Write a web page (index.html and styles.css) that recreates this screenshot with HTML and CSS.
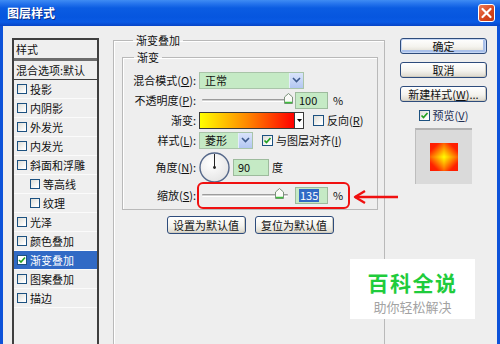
FILE: index.html
```html
<!DOCTYPE html>
<html lang="zh-CN">
<head>
    <meta charset="UTF-8">
    <meta name="viewport" content="width=device-width, initial-scale=1.0">
    <title>图层样式</title>
    <link rel="stylesheet" href="styles.css">
</head>
<body>
    <div class="window">
        <div class="titlebar">
            <span class="title">图层样式</span>
            <span class="close">
                <svg width="17" height="18" viewBox="0 0 17 18">
                    <path d="M4.5 5 L12.5 13 M12.5 5 L4.5 13" stroke="#fff" stroke-width="2.2" stroke-linecap="round"/>
                </svg>
            </span>
        </div>

        <div class="content">
            <ul class="style-list">
                <li class="list-head">样式</li>
                <li class="list-blend">混合选项:默认</li>
                <li><span class="check"></span>投影</li>
                <li><span class="check"></span>内阴影</li>
                <li><span class="check"></span>外发光</li>
                <li><span class="check"></span>内发光</li>
                <li><span class="check"></span>斜面和浮雕</li>
                <li class="sub"><span class="check"></span>等高线</li>
                <li class="sub"><span class="check"></span>纹理</li>
                <li><span class="check"></span>光泽</li>
                <li><span class="check"></span>颜色叠加</li>
                <li class="active">
                    <span class="check">
                        <svg width="8" height="8" viewBox="0 0 8 8"><path d="M1 4 L3 6 L7 1.5" stroke="#21a121" stroke-width="1.6" fill="none"/></svg>
                    </span>渐变叠加
                </li>
                <li><span class="check"></span>图案叠加</li>
                <li><span class="check"></span>描边</li>
                <li class="empty"></li>
            </ul>

            <fieldset class="group outer">
                <legend>渐变叠加</legend>
                <fieldset class="group inner">
                    <legend>渐变</legend>
                    <div class="form">
                        <label class="lbl">混合模式(<u>O</u>):</label>
                        <div class="ctl">
                            <div class="select blend">
                                <span class="select-text">正常</span>
                                <span class="select-arrow">
                                    <svg width="9" height="6" viewBox="0 0 9 6"><path d="M1 1 L4.5 4.5 L8 1" stroke="#3d5a8c" stroke-width="1.6" fill="none"/></svg>
                                </span>
                            </div>
                        </div>

                        <label class="lbl">不透明度(<u>P</u>):</label>
                        <div class="ctl">
                            <div class="slider">
                                <div class="track"></div>
                                <svg class="thumb" style="left: 82px" width="9" height="11" viewBox="0 0 9 11">
                                    <path d="M0.5 4 L4.5 0.5 L8.5 4 L8.5 10.5 L0.5 10.5 Z" fill="#fbfbf8" stroke="#7a917a"/>
                                    <path d="M1 9.5 L8 9.5" stroke="#3fbf3f" stroke-width="1.5"/>
                                </svg>
                            </div>
                            <div class="field num">100</div>
                            <span class="unit">%</span>
                        </div>

                        <label class="lbl">渐变:</label>
                        <div class="ctl">
                            <div class="gradient-bar">
                                <span class="bar-fill"></span>
                                <span class="bar-drop">
                                    <svg width="5" height="3" viewBox="0 0 5 3"><path d="M0 0 L5 0 L2.5 3 Z" fill="#000"/></svg>
                                </span>
                            </div>
                            <span class="check opt"></span>
                            <span class="opt-text">反向(<u>R</u>)</span>
                        </div>

                        <label class="lbl">样式(<u>L</u>):</label>
                        <div class="ctl">
                            <div class="select shape">
                                <span class="select-text">菱形</span>
                                <span class="select-arrow">
                                    <svg width="9" height="6" viewBox="0 0 9 6"><path d="M1 1 L4.5 4.5 L8 1" stroke="#3d5a8c" stroke-width="1.6" fill="none"/></svg>
                                </span>
                            </div>
                            <span class="check opt">
                                <svg width="9" height="9" viewBox="0 0 9 9"><path d="M1.5 4.5 L3.5 6.5 L7.5 2" stroke="#21a121" stroke-width="1.7" fill="none"/></svg>
                            </span>
                            <span class="opt-text">与图层对齐(<u>I</u>)</span>
                        </div>

                        <label class="lbl">角度(<u>N</u>):</label>
                        <div class="ctl">
                            <svg class="dial" width="31" height="31" viewBox="0 0 31 31">
                                <defs>
                                    <radialGradient id="dialFill" cx="0.4" cy="0.35" r="0.7">
                                        <stop offset="0" stop-color="#ffffff"/>
                                        <stop offset="1" stop-color="#e4e4e4"/>
                                    </radialGradient>
                                </defs>
                                <circle cx="15.5" cy="15.5" r="14.5" fill="url(#dialFill)" stroke="#55688a" stroke-width="1.4"/>
                                <path d="M15.5 15.5 L15.5 2" stroke="#222" stroke-width="1"/>
                                <circle cx="15.5" cy="15.5" r="1.4" fill="#222"/>
                            </svg>
                            <div class="field angle">90</div>
                            <span class="unit deg">度</span>
                        </div>

                        <label class="lbl">缩放(<u>S</u>):</label>
                        <div class="ctl">
                            <div class="slider">
                                <div class="track"></div>
                                <svg class="thumb" style="left: 73px" width="9" height="11" viewBox="0 0 9 11">
                                    <path d="M0.5 4 L4.5 0.5 L8.5 4 L8.5 10.5 L0.5 10.5 Z" fill="#fbfbf8" stroke="#7a917a"/>
                                    <path d="M1 9.5 L8 9.5" stroke="#3fbf3f" stroke-width="1.5"/>
                                </svg>
                            </div>
                            <div class="field num"><span class="selected">135</span></div>
                            <span class="unit">%</span>
                        </div>
                    </div>
                </fieldset>

                <div class="defaults">
                    <button class="btn wide">设置为默认值</button>
                    <button class="btn wide">复位为默认值</button>
                </div>
            </fieldset>

            <div class="side">
                <button class="btn side-btn default">确定</button>
                <button class="btn side-btn">取消</button>
                <button class="btn side-btn">新建样式(<u>W</u>)...</button>
                <div class="preview-check">
                    <span class="check opt">
                        <svg width="9" height="9" viewBox="0 0 9 9"><path d="M1.5 4.5 L3.5 6.5 L7.5 2" stroke="#21a121" stroke-width="1.7" fill="none"/></svg>
                    </span>
                    <span class="opt-text blue">预览(<u>V</u>)</span>
                </div>
                <div class="preview">
                    <div class="swatch">
                        <span class="q tl"></span>
                        <span class="q tr"></span>
                        <span class="q bl"></span>
                        <span class="q br"></span>
                    </div>
                </div>
            </div>
        </div>

        <!-- annotations over the screenshot -->
        <div class="mark-box"></div>
        <svg class="mark-arrow" width="48" height="16" viewBox="0 0 48 16">
            <path d="M3 8 L46 8" stroke="#f01010" stroke-width="2.4"/>
            <path d="M13 2 L3 8 L13 14" stroke="#f01010" stroke-width="2.4" fill="none" stroke-linejoin="round"/>
        </svg>
        <div class="watermark">
            <div class="wm-title">百科全说</div>
            <div class="wm-sub">助你轻松解决</div>
        </div>
    </div>
</body>
</html>
```

FILE: styles.css
```css
body {
    margin: 0;
    font-family: "Noto Sans CJK SC", "Noto Sans", sans-serif;
    font-size: 11px;
    color: #111;
}

.window {
    position: relative;
    width: 500px;
    height: 344px;
    overflow: hidden;
    background: #0d52d9;
}

/* Title bar */
.titlebar {
    height: 26px;
    display: flex;
    align-items: center;
    justify-content: space-between;
    padding: 0 5px 0 7px;
    box-sizing: border-box;
    background: linear-gradient(#3f8cf3 0, #2a78ee 3px, #0b5ce2 8px, #0656df 17px, #0a5ae4 22px, #0744c6 26px);
}

.title {
    color: #fff;
    font-size: 12px;
    font-weight: bold;
    line-height: 16px;
    text-shadow: 1px 1px 0 #0a2f8a;
}

.close {
    width: 17px;
    height: 18px;
    display: flex;
    border: 1px solid #fff;
    border-radius: 3px;
    box-sizing: border-box;
    background: linear-gradient(135deg, #ee7b57, #d5451c 60%, #c23a15);
}

.close svg {
    margin: -1px;
}

/* Dialog body */
.content {
    display: flex;
    align-items: flex-start;
    height: 318px;
    margin: 0 3px;
    padding: 12px 10px 0 9px;
    box-sizing: border-box;
    background: #eeeeee;
}

/* Styles list */
.style-list {
    list-style: none;
    margin: 0;
    padding: 0;
    width: 87px;
    height: 320px;
    flex: none;
    border: 2px solid #3f3f3f;
    box-sizing: border-box;
    background: #efefef;
}

.style-list li {
    height: 18px;
    display: flex;
    align-items: center;
    padding-left: 3px;
    line-height: 18px;
    border-bottom: 1px solid #fbfbfb;
}

.style-list .list-head {
    padding-left: 2px;
    border-bottom: 3px solid #6c6c6c;
}

.style-list .list-blend {
    padding-left: 2px;
    border-bottom: 1px solid #3f3f3f;
}

.style-list .sub {
    padding-left: 16px;
}

.style-list .active {
    background: #316ac5;
    color: #fff;
}

.style-list .empty {
    border-bottom: none;
}

.check {
    width: 11px;
    height: 11px;
    flex: none;
    display: flex;
    align-items: center;
    justify-content: center;
    border: 1px solid #1c5180;
    box-sizing: border-box;
    background: linear-gradient(135deg, #dcdcd5, #fff 85%);
}

.style-list .check {
    width: 10px;
    height: 10px;
    margin-right: 3px;
}

.style-list .active .check {
    background: #fff;
}

/* Group boxes */
.group {
    margin: 0;
    padding: 0;
    min-width: 0;
    border: 1px solid #b9b9b9;
    box-shadow: inset 1px 1px 0 #fff;
}

.group legend {
    margin-left: 11px;
    padding: 0 3px;
    font-size: 11px;
    line-height: 16px;
}

.outer {
    width: 272px;
    height: 330px;
    flex: none;
    margin: -6px 0 0 14px;
    padding: 0 6px 0 8px;
    box-sizing: border-box;
}

.inner {
    margin-top: 1px;
    padding: 5px 0 3px 0;
}

.form {
    display: grid;
    grid-template-columns: 76px auto;
    grid-template-rows: 20px 20px 20px 20px 34px 22px;
}

.lbl {
    align-self: center;
    text-align: right;
    padding-right: 3px;
    line-height: 14px;
    white-space: nowrap;
}

.ctl {
    display: flex;
    align-items: center;
}

u {
    text-underline-offset: 1px;
}

/* Controls */
.select {
    height: 17px;
    display: flex;
    border: 1px solid #a9c4a9;
    box-sizing: border-box;
    background: #c5eac5;
}

.select.blend {
    width: 105px;
}

.select.shape {
    width: 54px;
}

.select-text {
    flex: 1;
    padding-left: 5px;
    line-height: 15px;
}

.select-arrow {
    width: 13px;
    display: flex;
    align-items: center;
    justify-content: center;
    border-left: 1px solid #e4ecfb;
    background: linear-gradient(#d9e4fb, #b3c7f2);
}

.slider {
    position: relative;
    width: 90px;
    height: 20px;
    margin-left: 3px;
    display: flex;
    align-items: center;
}

.track {
    width: 86px;
    height: 3px;
    box-sizing: border-box;
    border-top: 1px solid #9c9c9c;
    border-bottom: 1px solid #fff;
    background: #d2d2d2;
    border-radius: 1px;
}

.thumb {
    position: absolute;
    top: 3px;
}

.field {
    height: 17px;
    margin-left: 3px;
    padding-left: 3px;
    border: 1px solid #9dbb9d;
    box-sizing: border-box;
    background: #c5eac5;
    line-height: 15px;
}

.field.num {
    width: 33px;
}

.field.angle {
    width: 36px;
    margin-left: 3px;
    padding-left: 4px;
}

.selected {
    display: inline-block;
    padding: 0 1px;
    background: #316ac5;
    color: #fff;
    line-height: 13px;
}

.unit {
    margin-left: 5px;
}

.unit.deg {
    margin-left: 3px;
}

.gradient-bar {
    width: 105px;
    height: 17px;
    display: flex;
    border: 1px solid #3a3a3a;
    box-sizing: border-box;
}

.bar-fill {
    flex: 1;
    background: linear-gradient(to right, #ffff00, #ff8800 50%, #ff0000);
}

.bar-drop {
    width: 8px;
    display: flex;
    align-items: center;
    justify-content: center;
    border-left: 1px solid #3a3a3a;
    background: #fff;
}

.check.opt {
    margin-left: 9px;
}

.opt-text {
    margin-left: 3px;
    white-space: nowrap;
}

.opt-text.blue {
    color: #1e2f55;
}

.dial {
    flex: none;
}

/* Buttons */
.btn {
    font-family: inherit;
    font-size: 11px;
    color: #111;
    padding: 0;
    border: 1px solid #2e4c7c;
    border-radius: 3px;
    background: linear-gradient(#ffffff, #f4f3ee 55%, #dcd8cc);
    box-shadow: inset -1px -1px 0 #d0ccbf;
    cursor: pointer;
}

.defaults {
    display: flex;
    justify-content: center;
    gap: 9px;
    margin-top: 6px;
}

.btn.wide {
    width: 79px;
    height: 18px;
    line-height: 16px;
}

.side {
    width: 87px;
    flex: none;
    margin-left: 15px;
    display: flex;
    flex-direction: column;
    align-items: center;
}

.side-btn {
    width: 87px;
    height: 16px;
    line-height: 14px;
    margin-bottom: 8px;
}

.side-btn.default {
    box-shadow: inset 0 0 0 1px #c5d7f5, inset -1px -1px 0 2px #a9c0ea;
}

.preview-check {
    display: flex;
    align-items: center;
    height: 11px;
    line-height: 11px;
}

.preview-check .check.opt {
    margin-left: 0;
}

.preview {
    width: 57px;
    height: 56px;
    margin-top: 7px;
    display: flex;
    align-items: center;
    justify-content: center;
    box-sizing: border-box;
    border-top: 2px solid #b3b3b3;
    border-left: 1px solid #bdbdbd;
    background: #dadada;
}

.swatch {
    width: 28px;
    height: 28px;
    display: grid;
    grid-template-columns: 14px 14px;
    grid-template-rows: 14px 14px;
}

.q.tl {
    background: linear-gradient(to top left, #ffff00 0%, #ff2200 70%, #ff1a00);
}

.q.tr {
    background: linear-gradient(to top right, #ffff00 0%, #ff2200 70%, #ff1a00);
}

.q.bl {
    background: linear-gradient(to bottom left, #ffff00 0%, #ff2200 70%, #ff1a00);
}

.q.br {
    background: linear-gradient(to bottom right, #ffff00 0%, #ff2200 70%, #ff1a00);
}

/* Annotations */
.mark-box {
    position: absolute;
    left: 197px;
    top: 182px;
    width: 153px;
    height: 27px;
    border: 2.5px solid #f01010;
    border-radius: 6px;
    box-sizing: border-box;
}

.mark-arrow {
    position: absolute;
    left: 352px;
    top: 189px;
}

.watermark {
    position: absolute;
    left: 350px;
    top: 259px;
    width: 125px;
    height: 60px;
    background: #fff;
    text-align: center;
}

.wm-title {
    margin-top: 10px;
    font-size: 21px;
    line-height: 26px;
    font-weight: bold;
    color: #1fcc3c;
    letter-spacing: 1.5px;
}

.wm-sub {
    margin-top: 4px;
    font-size: 13px;
    line-height: 16px;
    color: #a3a3a3;
}
```
